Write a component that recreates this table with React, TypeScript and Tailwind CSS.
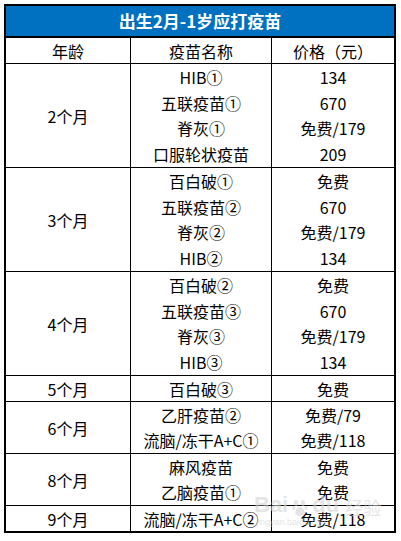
import React from 'react';

type Group = {
  age: string;
  rows: [string, string][];
};

const groups: Group[] = [
  {
    age: '2个月',
    rows: [
      ['HIB①', '134'],
      ['五联疫苗①', '670'],
      ['脊灰①', '免费/179'],
      ['口服轮状疫苗', '209'],
    ],
  },
  {
    age: '3个月',
    rows: [
      ['百白破①', '免费'],
      ['五联疫苗②', '670'],
      ['脊灰②', '免费/179'],
      ['HIB②', '134'],
    ],
  },
  {
    age: '4个月',
    rows: [
      ['百白破②', '免费'],
      ['五联疫苗③', '670'],
      ['脊灰③', '免费/179'],
      ['HIB③', '134'],
    ],
  },
  { age: '5个月', rows: [['百白破③', '免费']] },
  {
    age: '6个月',
    rows: [
      ['乙肝疫苗②', '免费/79'],
      ['流脑/冻干A+C①', '免费/118'],
    ],
  },
  {
    age: '8个月',
    rows: [
      ['麻风疫苗', '免费'],
      ['乙脑疫苗①', '免费'],
    ],
  },
  { age: '9个月', rows: [['流脑/冻干A+C②', '免费/118']] },
];

export default function App() {
  return (
    <div className="w-[401px] h-[541px] bg-white pt-[4px] pl-[4px] font-['Noto_Sans_CJK_SC','Noto_Sans',sans-serif] text-[16px] text-black">
      <div className="relative w-[392px] border-2 border-black">
        <div className="h-[30px] bg-[#0070c0] border-b-2 border-black box-content flex items-center justify-center text-white font-bold text-[17px]">
          出生2月-1岁应打疫苗
        </div>
        <div className="flex h-[26px] border-b border-black">
          <div className="w-[125px] border-r border-black flex items-center justify-center">年龄</div>
          <div className="w-[141px] border-r border-black flex items-center justify-center">疫苗名称</div>
          <div className="flex-1 flex items-center justify-center">价格（元）</div>
        </div>
        {groups.map((g, i) => (
          <div
            key={g.age}
            className={`flex ${i < groups.length - 1 ? 'border-b border-black' : ''}`}
            style={{ height: g.rows.length * 26 - (i < groups.length - 1 ? 0 : 1) }}
          >
            <div className="w-[125px] border-r border-black flex items-center justify-center">{g.age}</div>
            <div className="w-[141px] border-r border-black flex flex-col">
              {g.rows.map((r) => (
                <div key={r[0]} className="h-[26px] flex items-center justify-center leading-none">
                  {r[0]}
                </div>
              ))}
            </div>
            <div className="flex-1 flex flex-col">
              {g.rows.map((r, j) => (
                <div key={j} className="h-[26px] flex items-center justify-center leading-none">
                  {r[1]}
                </div>
              ))}
            </div>
          </div>
        ))}
        <div className="absolute left-[248px] top-[488px] flex flex-col items-start pointer-events-none text-[#d4d4d4] opacity-60">
          <div className="flex items-end gap-[4px] leading-none">
            <span className="font-['Liberation_Sans',sans-serif] font-bold text-[22px]">Bai</span>
            <svg width="16" height="18" viewBox="0 0 16 18" fill="#d4d4d4">
              <ellipse cx="4" cy="5" rx="2" ry="3" />
              <ellipse cx="11" cy="5" rx="2" ry="3" />
              <ellipse cx="1.5" cy="10" rx="1.5" ry="2" />
              <ellipse cx="14" cy="10" rx="1.5" ry="2" />
              <path d="M8 9 C4 9 2 15 4 17 C6 18 10 18 12 17 C14 15 12 9 8 9 Z" />
            </svg>
            <span className="font-['Liberation_Sans',sans-serif] font-bold text-[22px]">du</span>
            <span className="text-[18px] ml-[2px]">经验</span>
          </div>
          <span className="font-['Liberation_Sans',sans-serif] text-[9px] leading-none mt-[2px] ml-[2px]">jingyan.baidu.com</span>
        </div>
      </div>
    </div>
  );
}
